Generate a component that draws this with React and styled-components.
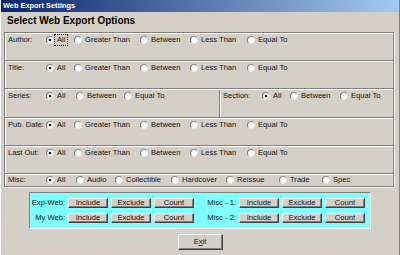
import React from 'react';
import styled, { createGlobalStyle } from "styled-components";

const GlobalStyle = createGlobalStyle`
    html, body {
        margin: 0;
        padding: 0;
        background: #d4d0c8;
    }
    body {
        font-family: "Liberation Sans", Arial, sans-serif;
    }
`;

const Window = styled.div`
    width: 400px;
    height: 255px;
    box-sizing: border-box;
    background: #d4d0c8;
    border-left: 1px solid #fff;
    border-right: 1px solid #808080;
    overflow: hidden;
    display: flex;
    flex-direction: column;
`;

const TitleBar = styled.div`
    height: 12px;
    background: linear-gradient(to right, #0a246a, #a6caf0);
    color: #fff;
    font-weight: bold;
    font-size: 7.4px;
    line-height: 12px;
    padding-left: 2px;
`;

const Heading = styled.div`
    font-weight: bold;
    font-size: 10px;
    line-height: 12px;
    margin: 3px 0 0 6px;
    color: #000;
`;

const OptionsBox = styled.div`
    margin: 5px 0 0 3px;
    width: 390px;
    box-sizing: border-box;
    border: 1px solid #808080;
    box-shadow: 1px 1px 0 #fff, inset 1px 0 0 #fff;
`;

const Row = styled.div`
    display: flex;
    align-items: stretch;
    height: ${p => p.$h}px;
    box-sizing: border-box;
    border-top: 1px solid #fff;
    border-bottom: ${p => p.$last ? 'none' : '1px solid #808080'};
`;

const Cell = styled.div`
    display: flex;
    align-items: flex-start;
    box-sizing: border-box;
    padding: ${p => p.$pt ?? 2}px 0 0 ${p => p.$pl ?? 3}px;
    width: ${p => p.$w ? `${p.$w}px` : 'auto'};
    flex: ${p => p.$w ? 'none' : '1'};
    border-right: ${p => p.$divider ? '1px solid #808080' : 'none'};
    border-left: ${p => p.$afterDivider ? '1px solid #fff' : 'none'};
`;

const Label = styled.span`
    width: ${p => p.$w || 38}px;
    flex: none;
    font-size: 7.6px;
    line-height: 8px;
    color: #111;
`;

const Option = styled.label`
    display: inline-flex;
    align-items: center;
    gap: 2px;
    width: ${p => p.$w ? `${p.$w}px` : 'auto'};
    flex: none;
    font-size: 7.6px;
    line-height: 8px;
    color: #111;
`;

const OptionText = styled.span`
    padding: 0 1px;
    outline: ${p => p.$focus ? '1px dotted #000' : 'none'};
    outline-offset: 1px;
`;

const Panel = styled.div`
    margin: 5px auto 0;
    width: 342px;
    height: 37px;
    box-sizing: border-box;
    background: #80ffff;
    border: 1px solid;
    border-color: #808080 #fff #fff #808080;
    padding: 5px 0 0 0;
    display: grid;
    grid-template-columns: 35px 40px 40px 40px 39px 40px 40px 40px;
    grid-auto-rows: 10px;
    column-gap: 3px;
    row-gap: 5px;
`;

const PanelLabel = styled.span`
    text-align: right;
    font-size: 7.6px;
    line-height: 10px;
    color: #111;
`;

const Button = styled.button`
    box-sizing: border-box;
    margin: 0;
    padding: 0;
    width: ${p => p.$w || 40}px;
    height: ${p => p.$h || 10}px;
    background: #d4d0c8;
    border: 1px solid;
    border-color: #fff #404040 #404040 #fff;
    box-shadow: inset -1px -1px 0 #808080;
    font-family: "Liberation Sans", Arial, sans-serif;
    font-size: 7.6px;
    line-height: 8px;
    color: #111;
`;

const ExitButton = styled(Button)`
    display: block;
    margin: 5px auto 0;
    text-align: center;
`;

const Radio = ({ checked }) => (
    <svg width="8" height="8" viewBox="0 0 8 8">
        <circle cx="4" cy="4" r="3.5" fill="#fff" />
        <path d="M1.5 6.5 A3.5 3.5 0 0 1 6.5 1.5" fill="none" stroke="#808080" strokeWidth="1.1" />
        <path d="M6.5 1.5 A3.5 3.5 0 0 1 1.5 6.5" fill="none" stroke="#e8e6e0" strokeWidth="0.8" />
        {checked && <circle cx="4" cy="4" r="1.3" fill="#000" />}
    </svg>
);

const comparisons = [
    ['All', 28], ['Greater Than', 66], ['Between', 50], ['Less Than', 57], ['Equal To'],
];

const RadioRow = ({ label, items, focus, labelWidth }) => (
    <>
        <Label $w={labelWidth}>{label}</Label>
        {items.map(([text, w], i) => (
            <Option key={text} $w={w}>
                <Radio checked={i === 0} />
                <OptionText $focus={focus && i === 0}>{text}</OptionText>
            </Option>
        ))}
    </>
);

const buttonRows = [
    ['Exp-Web:', 'Misc - 1:'],
    ['My Web:', 'Misc - 2:'],
];

const App = () => {
    return (
        <>
            <GlobalStyle />
            <Window>
                <TitleBar>Web Export Settings</TitleBar>
                <Heading>Select Web Export Options</Heading>
                <OptionsBox>
                    <Row $h={28}>
                        <Cell><RadioRow label="Author:" items={comparisons} focus /></Cell>
                    </Row>
                    <Row $h={28}>
                        <Cell><RadioRow label="Title:" items={comparisons} /></Cell>
                    </Row>
                    <Row $h={29}>
                        <Cell $w={215} $divider>
                            <RadioRow label="Series:" items={[['All', 30], ['Between', 48], ['Equal To']]} />
                        </Cell>
                        <Cell $afterDivider $pl={2}>
                            <RadioRow label="Section:" labelWidth={39} items={[['All', 28], ['Between', 50], ['Equal To']]} />
                        </Cell>
                    </Row>
                    <Row $h={28}>
                        <Cell><RadioRow label="Pub. Date:" items={comparisons} /></Cell>
                    </Row>
                    <Row $h={28}>
                        <Cell><RadioRow label="Last Out:" items={comparisons} /></Cell>
                    </Row>
                    <Row $h={12} $last>
                        <Cell $pt={1}>
                            <RadioRow
                                label="Misc:"
                                items={[['All', 30], ['Audio', 39], ['Collectible', 56], ['Hardcover', 55], ['Reissue', 53], ['Trade', 43], ['Spec']]}
                            />
                        </Cell>
                    </Row>
                </OptionsBox>
                <Panel>
                    {buttonRows.map(([left, right]) => (
                        <React.Fragment key={left}>
                            <PanelLabel>{left}</PanelLabel>
                            <Button>Include</Button>
                            <Button>Exclude</Button>
                            <Button>Count</Button>
                            <PanelLabel>{right}</PanelLabel>
                            <Button>Include</Button>
                            <Button>Exclude</Button>
                            <Button>Count</Button>
                        </React.Fragment>
                    ))}
                </Panel>
                <ExitButton $w={45} $h={16}>E<u>x</u>it</ExitButton>
            </Window>
        </>
    );
};

export default App;
